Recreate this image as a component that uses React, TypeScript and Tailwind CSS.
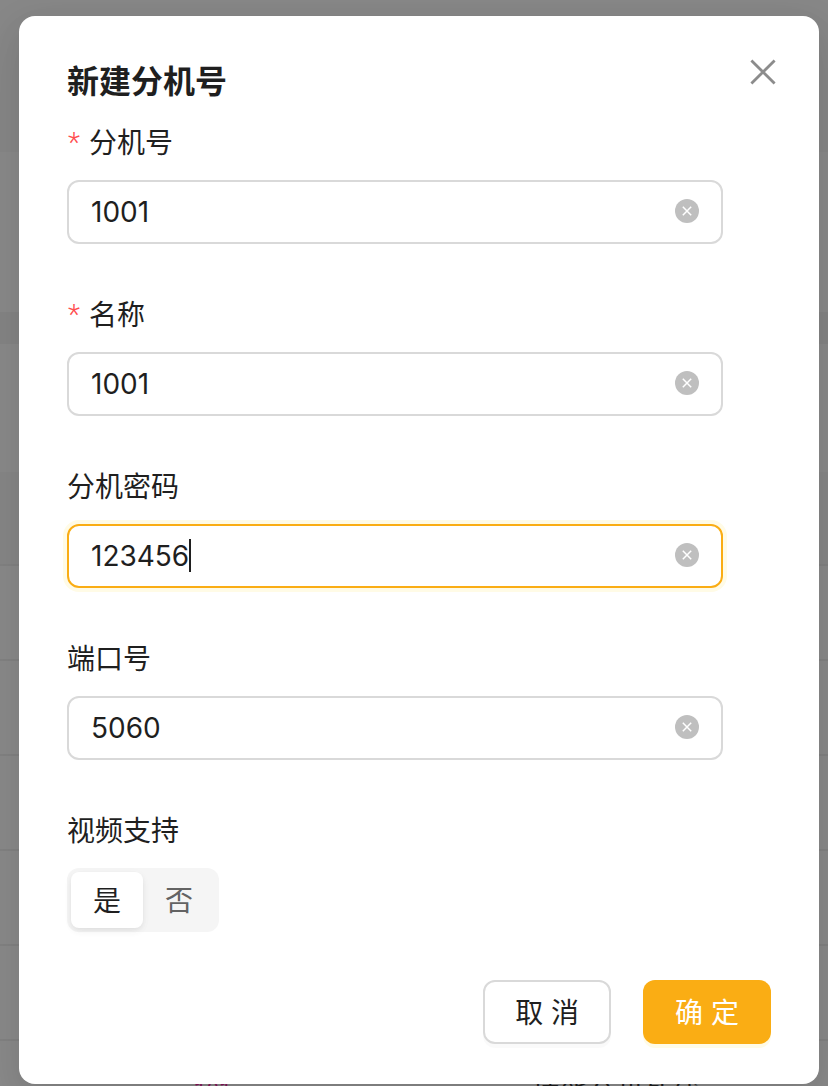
import { useState } from "react";

type FieldProps = {
  id: string;
  label: string;
  value: string;
  onChange: (value: string) => void;
  required?: boolean;
  active?: boolean;
};

function ClearIcon() {
  return (
    <svg viewBox="0 0 24 24" className="size-6" aria-hidden="true">
      <circle cx="12" cy="12" r="12" fill="#bfbfbf" />
      <path d="M7.8 7.8l8.4 8.4M16.2 7.8l-8.4 8.4" stroke="#fff" strokeWidth="1.5" />
    </svg>
  );
}

function Field({ id, label, value, onChange, required, active }: FieldProps) {
  return (
    <div className="mb-12 flex flex-col gap-4">
      <label htmlFor={id} className="flex h-11 items-center pt-[2px]">
        {required && (
          <span className="mr-2 w-[14px] text-center font-['Roboto',sans-serif] font-light text-[#ff4d4f]">*</span>
        )}
        {label}
      </label>
      <div
        className={
          active
            ? "relative flex h-16 items-center rounded-xl border-2 border-[#faad14] px-[22px] shadow-[0_0_0_4px_#fffbe6]"
            : "relative flex h-16 items-center rounded-xl border-2 border-[#d9d9d9] px-[22px]"
        }
      >
        <input
          id={id}
          type="text"
          value={value}
          onChange={(e) => onChange(e.target.value)}
          className="h-full min-w-0 flex-1 bg-transparent outline-none"
        />
        {active && <span className="absolute top-[13px] left-[120px] h-[33px] w-[2px] bg-[#1f1f1f]" />}
        <button type="button" aria-label="清除" onClick={() => onChange("")} className="pb-[2px]">
          <ClearIcon />
        </button>
      </div>
    </div>
  );
}

function Backdrop() {
  return (
    <div className="flex h-screen flex-col overflow-hidden bg-[#8b8b8b]">
      <div className="h-[152px] shrink-0 bg-[#888888]" />
      <div className="h-[160px] shrink-0" />
      <div className="h-8 shrink-0 bg-[#868686]" />
      <div className="h-32 shrink-0" />
      <div className="h-[94px] shrink-0 border-b-2 border-[#838383] bg-[#888888]" />
      {[1, 2, 3, 4, 5].map((row) => (
        <div key={row} className="h-[95px] shrink-0 border-b-2 border-[#838383]" />
      ))}
      <div className="flex h-[95px] shrink-0 items-end pl-[194px] text-[#1f1f1f]">
        <span className="w-[338px] font-['Liberation_Mono',monospace] text-[21px] leading-[92px] text-[#87145a]">
          101
        </span>
        <span className="leading-[82px]">技能分机外线</span>
      </div>
    </div>
  );
}

export default function App() {
  const [extension, setExtension] = useState("1001");
  const [name, setName] = useState("1001");
  const [password, setPassword] = useState("123456");
  const [port, setPort] = useState("5060");
  const [video, setVideo] = useState("是");

  return (
    <div className="grid h-screen overflow-hidden font-['Inter','Noto_Sans_CJK_SC',sans-serif] text-[28px] leading-[44px] text-[#1f1f1f]">
      <div className="col-start-1 row-start-1">
        <Backdrop />
      </div>
      <div className="z-10 col-start-1 row-start-1 pt-4 pr-[9px] pl-[19px]">
        <form
          role="dialog"
          aria-labelledby="dialog-title"
          onSubmit={(e) => e.preventDefault()}
          className="rounded-2xl bg-white px-12 py-10 shadow-[0_12px_32px_0_rgba(0,0,0,0.08),0_18px_56px_16px_rgba(0,0,0,0.05)]"
        >
          <div className="mb-4 flex h-12 justify-between">
            <h1 id="dialog-title" className="pt-[2px] text-[32px] leading-[48px] font-semibold">
              新建分机号
            </h1>
            <button type="button" aria-label="关闭" className="-mr-2 flex size-8 items-center justify-center">
              <svg viewBox="0 0 32 32" className="size-8" fill="none" aria-hidden="true">
                <path d="M4.4 4.4l23.2 23.2M27.6 4.4L4.4 27.6" stroke="#8c8c8c" strokeWidth="2.8" />
              </svg>
            </button>
          </div>
          <div className="pr-12">
            <Field id="extension" label="分机号" value={extension} onChange={setExtension} required />
            <Field id="name" label="名称" value={name} onChange={setName} required />
            <Field id="password" label="分机密码" value={password} onChange={setPassword} active />
            <Field id="port" label="端口号" value={port} onChange={setPort} />
            <fieldset className="mb-12">
              <legend className="mb-4 flex h-11 items-center pt-[2px]">视频支持</legend>
              <div className="flex h-16 w-fit rounded-xl bg-[#f5f5f5] p-1">
                {["是", "否"].map((option) => (
                  <label
                    key={option}
                    className={
                      video === option
                        ? "flex items-center rounded-lg bg-white px-[22px] pt-[2px] shadow-[0_2px_4px_0_rgba(0,0,0,0.04),0_2px_12px_-2px_rgba(0,0,0,0.05),0_4px_8px_0_rgba(0,0,0,0.03)]"
                        : "flex items-center rounded-lg px-[22px] pt-[2px] text-[#636363]"
                    }
                  >
                    <input
                      type="radio"
                      name="video"
                      value={option}
                      checked={video === option}
                      onChange={() => setVideo(option)}
                      className="sr-only"
                    />
                    {option}
                  </label>
                ))}
              </div>
            </fieldset>
          </div>
          <div className="flex justify-end gap-8">
            <button
              type="button"
              className="h-16 rounded-xl border-2 border-[#d9d9d9] bg-white px-[30px] pt-[2px] shadow-[0_4px_0_0_rgba(0,0,0,0.02)]"
            >
              取 消
            </button>
            <button
              type="submit"
              className="h-16 rounded-xl bg-[#faad14] px-8 pt-[2px] text-white shadow-[0_4px_0_0_#fffbe6]"
            >
              确 定
            </button>
          </div>
        </form>
      </div>
    </div>
  );
}
